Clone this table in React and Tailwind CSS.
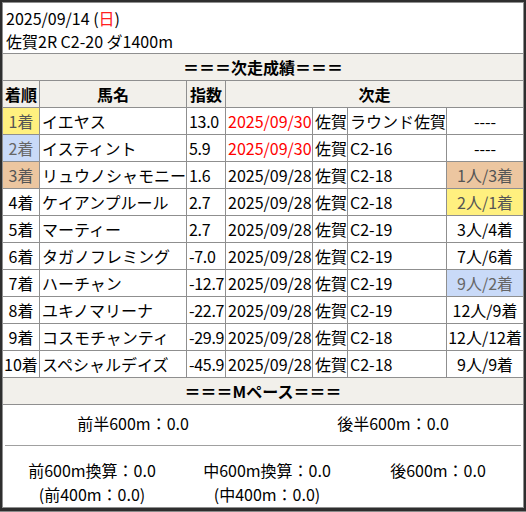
import React from 'react';

const YELLOW = 'bg-[#fff07f] text-[#555]';
const BLUE = 'bg-[#c9daf8] text-[#666]';
const TAN = 'bg-[#ecc6a0] text-[#555]';

const rows = [
  { rank: '1着', rankCls: YELLOW, name: 'イエヤス', idx: '13.0', date: '2025/09/30', red: true, place: '佐賀', race: 'ラウンド佐賀', result: '----' },
  { rank: '2着', rankCls: BLUE, name: 'イスティント', idx: '5.9', date: '2025/09/30', red: true, place: '佐賀', race: 'C2-16', result: '----' },
  { rank: '3着', rankCls: TAN, name: 'リュウノシャモニー', idx: '1.6', date: '2025/09/28', place: '佐賀', race: 'C2-18', result: '1人/3着', resultCls: TAN },
  { rank: '4着', name: 'ケイアンプルール', idx: '2.7', date: '2025/09/28', place: '佐賀', race: 'C2-18', result: '2人/1着', resultCls: YELLOW },
  { rank: '5着', name: 'マーティー', idx: '2.7', date: '2025/09/28', place: '佐賀', race: 'C2-19', result: '3人/4着' },
  { rank: '6着', name: 'タガノフレミング', idx: '-7.0', date: '2025/09/28', place: '佐賀', race: 'C2-19', result: '7人/6着' },
  { rank: '7着', name: 'ハーチャン', idx: '-12.7', date: '2025/09/28', place: '佐賀', race: 'C2-19', result: '9人/2着', resultCls: BLUE },
  { rank: '8着', name: 'ユキノマリーナ', idx: '-22.7', date: '2025/09/28', place: '佐賀', race: 'C2-19', result: '12人/9着' },
  { rank: '9着', name: 'コスモチャンティ', idx: '-29.9', date: '2025/09/28', place: '佐賀', race: 'C2-18', result: '12人/12着' },
  { rank: '10着', name: 'スペシャルデイズ', idx: '-45.9', date: '2025/09/28', place: '佐賀', race: 'C2-18', result: '9人/9着' },
];

const td = 'border border-[#8f8f8f] p-0 leading-[26px] whitespace-nowrap overflow-hidden';

export default function App() {
  return (
    <div className="w-[526px] h-[512px] bg-[#8a8a8a] font-['Noto_Sans_CJK_JP',sans-serif] text-[16px] text-black">
      <div className="bg-[#2e2e2e] pt-[2px] pl-[2px] pr-[3px] pb-[3px]">
        <table className="w-[521px] table-fixed border-collapse bg-white">
          <colgroup>
            <col className="w-[37px]" />
            <col className="w-[147px]" />
            <col className="w-[39px]" />
            <col className="w-[87px]" />
            <col className="w-[35px]" />
            <col className="w-[99px]" />
            <col className="w-[77px]" />
          </colgroup>
          <tbody>
            <tr>
              <td colSpan={7} className="border border-[#8f8f8f] px-[3px] pt-[4px] pb-0 leading-[23px]">
                <div>
                  2025/09/14 (<span className="text-[#ff2020]">日</span>)
                </div>
                <div>佐賀2R C2-20 ダ1400m</div>
              </td>
            </tr>
            <tr>
              <td colSpan={7} className={`${td} bg-[#f2f0eb] text-center font-bold`}>
                ＝＝＝次走成績＝＝＝
              </td>
            </tr>
            <tr className="bg-[#f2f0eb] font-bold">
              <td className={`${td} text-center`}>着順</td>
              <td className={`${td} text-center`}>馬名</td>
              <td className={`${td} text-center`}>指数</td>
              <td colSpan={4} className={`${td} text-center`}>次走</td>
            </tr>
            {rows.map((r) => (
              <tr key={r.rank}>
                <td className={`${td} text-center ${r.rankCls || ''}`}>{r.rank}</td>
                <td className={`${td} px-[2px]`}>{r.name}</td>
                <td className={`${td} px-[2px] tracking-[-0.3px]`}>{r.idx}</td>
                <td className={`${td} px-[2px] ${r.red ? 'text-[#ff0000]' : ''}`}>{r.date}</td>
                <td className={`${td} px-[2px]`}>{r.place}</td>
                <td className={`${td} px-[2px]`}>{r.race}</td>
                <td className={`${td} text-center ${r.resultCls || ''}`}>{r.result}</td>
              </tr>
            ))}
            <tr>
              <td colSpan={7} className={`${td} bg-[#f2f0eb] text-center font-bold`}>
                ＝＝＝Mペース＝＝＝
              </td>
            </tr>
            <tr>
              <td colSpan={7} className="border border-[#8f8f8f] p-0 pt-[6px] pb-[1px]">
                <div className="grid grid-cols-2 leading-[24px] text-center">
                  <div>前半600m：0.0</div>
                  <div>後半600m：0.0</div>
                </div>
                <div className="mx-[2px] mt-[10px] border-t border-[#a0a0a0]" />
                <div className="mt-[12px] grid grid-cols-[178px_172px_170px] leading-[24px] text-center">
                  <div>
                    <div>前600m換算：0.0</div>
                    <div>(前400m：0.0)</div>
                  </div>
                  <div>
                    <div>中600m換算：0.0</div>
                    <div>(中400m：0.0)</div>
                  </div>
                  <div>
                    <div>後600m：0.0</div>
                  </div>
                </div>
              </td>
            </tr>
          </tbody>
        </table>
      </div>
    </div>
  );
}
